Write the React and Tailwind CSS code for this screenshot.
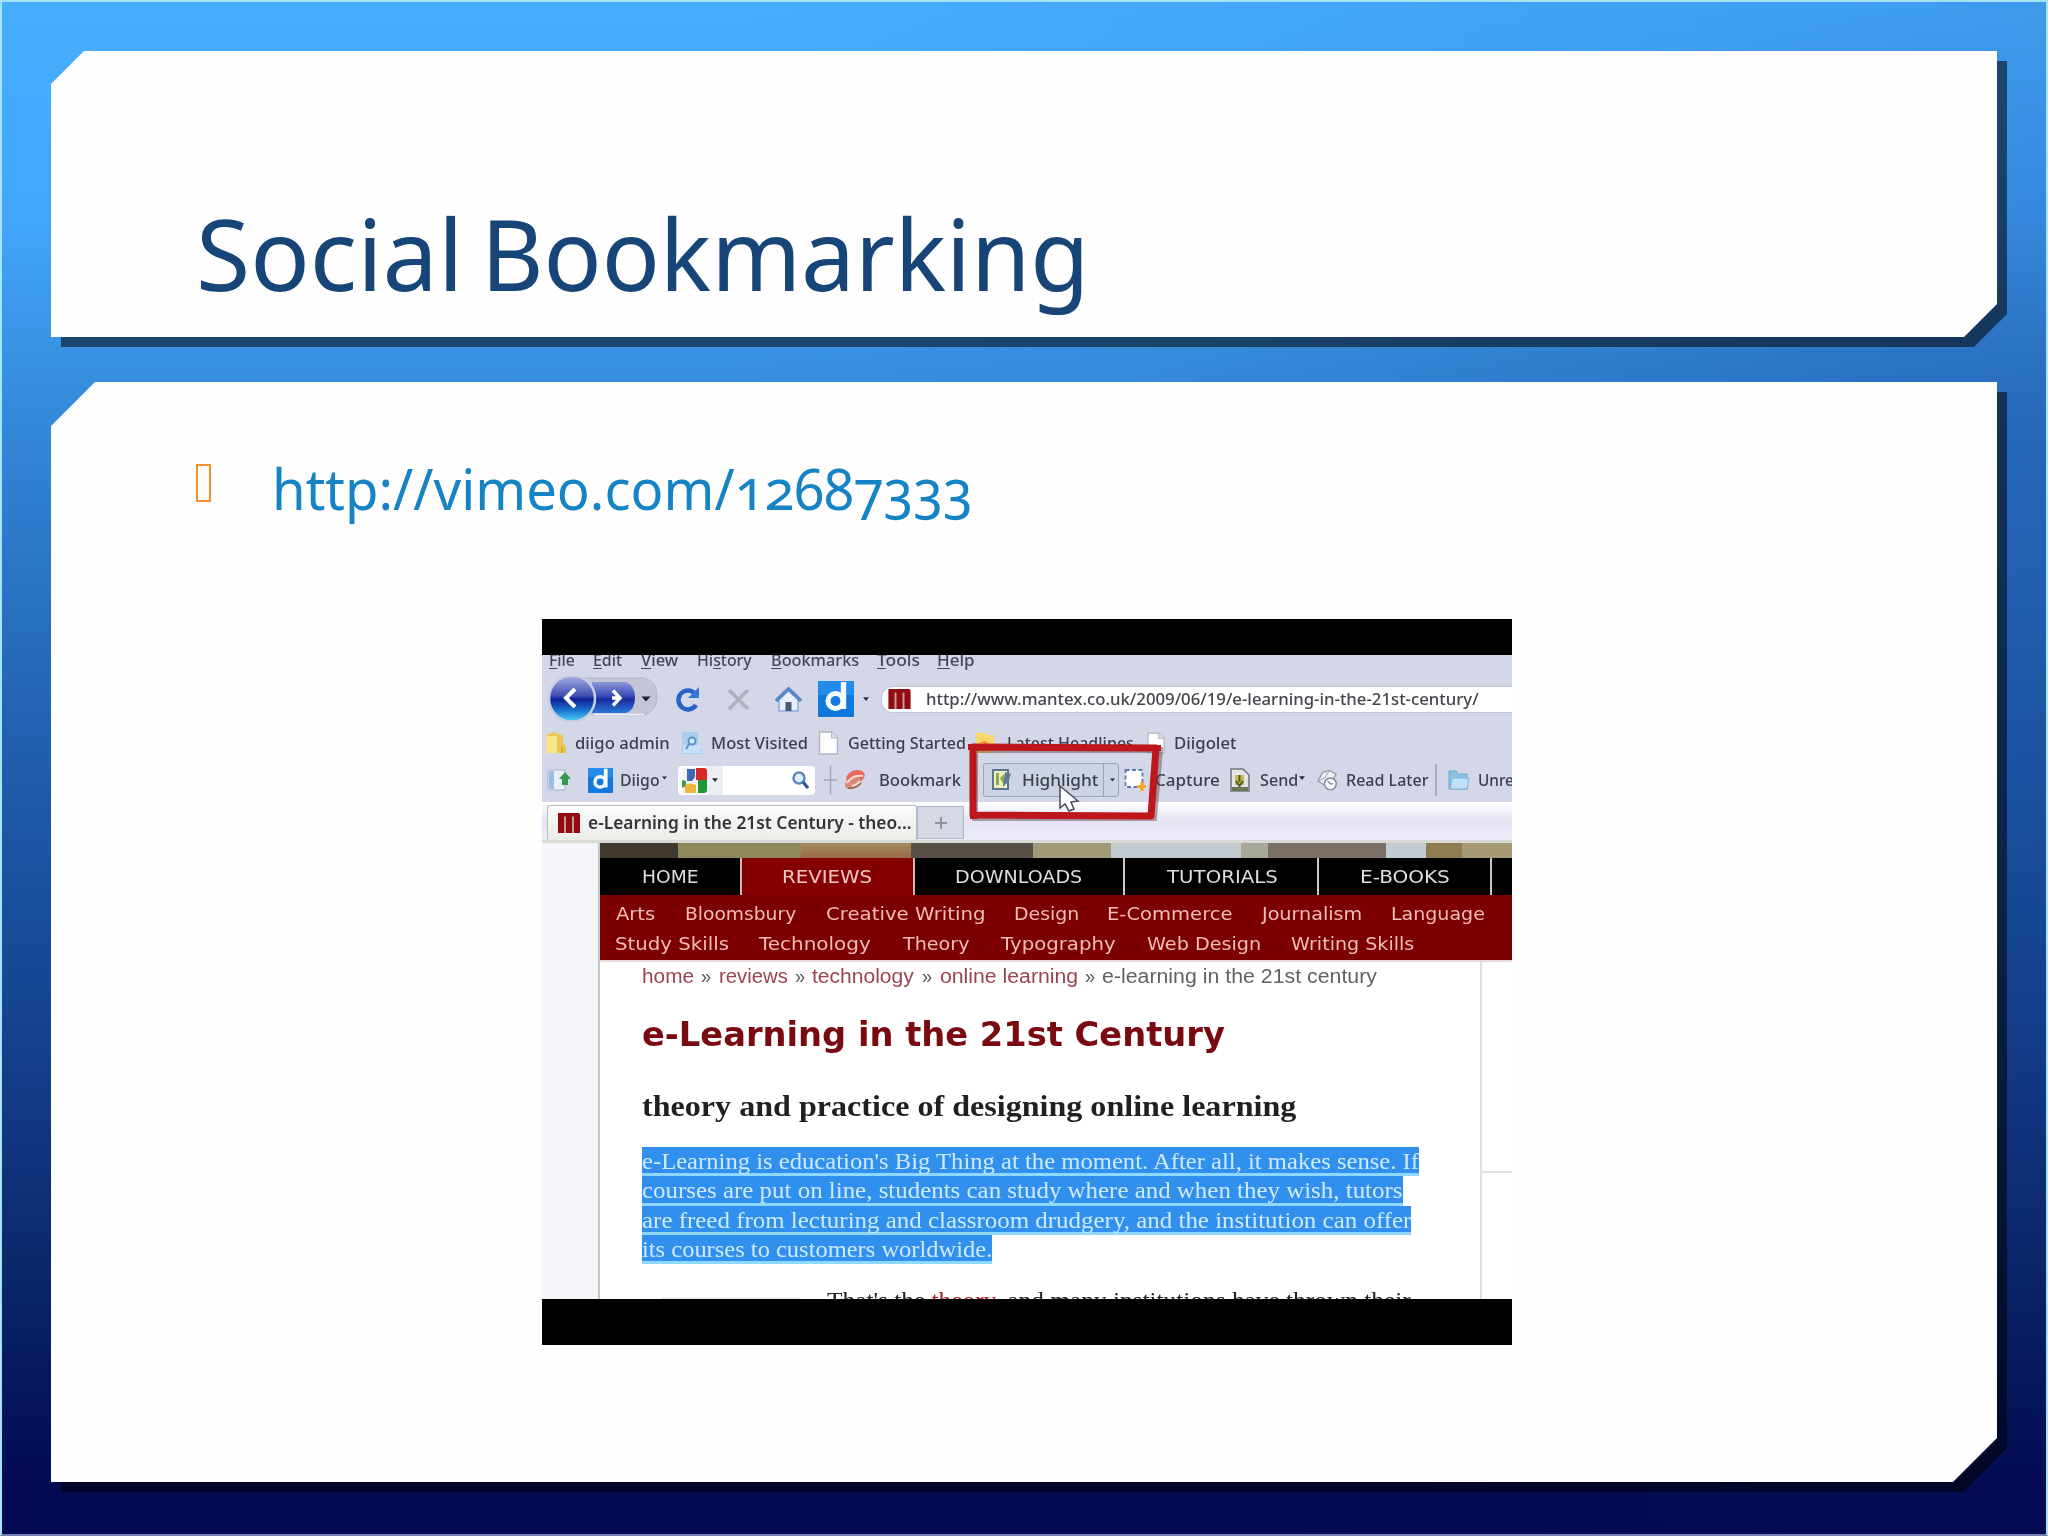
import React, { useLayoutEffect, useRef } from 'react';
import clsx from 'clsx';

// Single line of text stretched or squeezed to the width of its box
const Fit = ({ className, children }) => {
  const box = useRef(null);
  const text = useRef(null);

  useLayoutEffect(() => {
    const natural = text.current.offsetWidth;
    text.current.style.transform = `scaleX(${box.current.clientWidth / natural})`;
  }, []);

  return (
    <div ref={box} className={clsx('shrink-0 whitespace-nowrap', className)}>
      <span ref={text} className="inline-block origin-left">{children}</span>
    </div>
  );
};

const Card = ({ className, shape, children }) => (
  <div className="drop-shadow-[10px_10px_0_rgba(0,0,0,0.53)]">
    <div className={clsx('bg-[#fefefe]', shape, className)}>{children}</div>
  </div>
);

const Caret = ({ className }) => (
  <svg viewBox="0 0 8 5" className={clsx('shrink-0', className)}>
    <path d="M0 0h8L4 5z" fill="#2b2d3a" />
  </svg>
);

const DiigoLogo = ({ className }) => (
  <svg viewBox="0 0 36 36" className={clsx('shrink-0', className)}>
    <rect width="36" height="36" rx="1" fill="#1279dc" />
    <rect width="36" height="14" fill="#2b93ee" opacity=".7" />
    <circle cx="17.500" cy="20" r="7.500" fill="none" stroke="#f4fbff" strokeWidth="5" />
    <path d="M25.500 1v27" stroke="#f4fbff" strokeWidth="5.400" />
  </svg>
);

const MantexLogo = ({ className }) => (
  <svg viewBox="0 0 22 20" className={clsx('shrink-0', className)}>
    <rect width="22" height="20" rx="1" fill="#c79a9a" />
    <path d="M0 0h20q2 0 2 3v17h-6V3.500h-2V20H8V3.500H6V20H0z" fill="#920b10" />
  </svg>
);

const PageIcon = ({ className }) => (
  <svg viewBox="0 0 20 24" className={clsx('shrink-0', className)}>
    <path d="M1 1h12l6 6v16H1z" fill="#fdfdfd" stroke="#b4b6bf" strokeWidth="1.400" />
    <path d="M13 1v6h6" fill="#dcdde2" stroke="#b4b6bf" />
  </svg>
);

const MenuBar = () => (
  <div className="h-[21px] flex items-start text-[17px] font-medium leading-[22px] text-[#454756]">
    <div className="flex -mt-[6px] [&_u]:underline-offset-2">
      <Fit className="ml-[7px] w-[26px]"><u>F</u>ile</Fit>
      <Fit className="ml-[18px] w-[29px]"><u>E</u>dit</Fit>
      <Fit className="ml-[19px] w-[37px]"><u>V</u>iew</Fit>
      <Fit className="ml-[19px] w-[55px]">Hi<u>s</u>tory</Fit>
      <Fit className="ml-[19px] w-[88px]"><u>B</u>ookmarks</Fit>
      <Fit className="ml-[18px] w-[43px]"><u>T</u>ools</Fit>
      <Fit className="ml-[17px] w-[38px]"><u>H</u>elp</Fit>
    </div>
  </div>
);

const BackForward = () => (
  <svg viewBox="0 0 118 46" className="w-[118px] h-[46px] shrink-0">
    <defs>
      <linearGradient id="back" x1="0" y1="0" x2="0" y2="1">
        <stop offset="0" stopColor="#a9b3e4" />
        <stop offset=".44" stopColor="#3d4fb4" />
        <stop offset=".52" stopColor="#0f1f96" />
        <stop offset=".75" stopColor="#1672cf" />
        <stop offset="1" stopColor="#4fd4f4" />
      </linearGradient>
      <linearGradient id="fwd" x1="0" y1="0" x2="0" y2="1">
        <stop offset="0" stopColor="#8c98d8" />
        <stop offset=".45" stopColor="#3a4cb8" />
        <stop offset=".55" stopColor="#1a2a9e" />
        <stop offset="1" stopColor="#2a78d8" />
      </linearGradient>
    </defs>
    <path d="M40 2h62q13 3 13 18t-13 19H50z" fill="#c3c6d6" stroke="#b4b7c8" />
    <path d="M50 6h34q9 3 9 15.500T84 37H50z" fill="url(#fwd)" />
    <path d="M52 38.500h50" stroke="#eef0fa" strokeWidth="1.500" />
    <circle cx="30" cy="22.500" r="23" fill="url(#back)" stroke="#c9cde0" strokeWidth="2.500" />
    <path d="M33 13l-9 9 9 9" fill="none" stroke="#fff" strokeWidth="4" />
    <path d="M71 14.500l7 7.500-7 7.500M70 22h6" fill="none" stroke="#fff" strokeWidth="3.400" />
    <path d="M99.500 20.500h9l-4.500 5z" fill="#1d1e28" />
  </svg>
);

const NavBar = () => (
  <div className="h-[46px] flex items-center">
    <BackForward />
    <svg viewBox="0 0 25 25" className="ml-[15px] w-[25px] h-[25px] shrink-0">
      <path d="M20 6.500A9.500 9.500 0 1 0 21 18" fill="none" stroke="#2862c4" strokeWidth="4.500" />
      <path d="M24 0v11H13z" fill="#3477d6" />
    </svg>
    <svg viewBox="0 0 23 23" className="ml-[27px] w-[23px] h-[23px] shrink-0">
      <path d="M2 2l19 19M21 2L2 21" stroke="#aeb1be" strokeWidth="3.600" />
    </svg>
    <svg viewBox="0 0 27 25" className="ml-[25px] w-[27px] h-[25px] shrink-0">
      <path d="M4 12l9.500-9L23 12v12H4z" fill="#e9effa" stroke="#8fabd8" strokeWidth="1.500" />
      <path d="M1 14L13.500 2 26 14" fill="none" stroke="#5c84c6" strokeWidth="3.800" />
      <path d="M10.500 24v-9h6v9z" fill="#4a5a78" />
    </svg>
    <DiigoLogo className="ml-4 w-9 h-9" />
    <Caret className="ml-[9px] w-[6px] h-[4px]" />
    <div className="ml-3 flex-1 h-[27px] rounded-l-xl border border-r-0 border-[#c2c5d4] bg-white flex items-center">
      <MantexLogo className="ml-[6px] w-[23px] h-5" />
      <Fit className="ml-[15px] w-[553px] text-[17px] font-medium text-[#45464c]">
        http://www.mantex.co.uk/2009/06/19/e-learning-in-the-21st-century/
      </Fit>
    </div>
  </div>
);

const BookmarksBar = () => (
  <div className="h-[40px] pt-px flex items-center text-[17px] font-medium text-[#3c3e4c]">
    <svg viewBox="0 0 21 24" className="ml-[3px] w-[21px] h-6 shrink-0">
      <path d="M1 4l9-3 2 2 6 1v9l3 2v7H1z" fill="#ecc851" />
      <path d="M1 5h11v17H1z" fill="#f9e48c" />
      <path d="M17 16v6" stroke="#b98f28" />
    </svg>
    <Fit className="ml-[9px] w-[95px]">diigo admin</Fit>
    <svg viewBox="0 0 21 24" className="ml-[11px] w-[21px] h-6 shrink-0">
      <path d="M1 1h16v15l4 2v5H1z" fill="#a9cdee" />
      <path d="M2 14h18v8H2z" fill="#c8e0f5" />
      <circle cx="11" cy="10" r="3.500" fill="#d8ebfa" stroke="#5a90c8" strokeWidth="2" />
      <path d="M8 13l-3 5" stroke="#5a90c8" strokeWidth="2" />
    </svg>
    <Fit className="ml-[9px] w-[97px]">Most Visited</Fit>
    <PageIcon className="ml-2.5 w-[21px] h-6" />
    <Fit className="ml-[9px] w-[118px]">Getting Started</Fit>
    <svg viewBox="0 0 20 24" className="ml-[9px] w-5 h-6 shrink-0">
      <path d="M1 2h9l2 2h7v18H1z" fill="#f8d869" />
      <circle cx="9" cy="15" r="5" fill="#f09a3c" />
      <path d="M6 13q5 0 5 5" fill="none" stroke="#fff3d8" strokeWidth="1.500" />
    </svg>
    <Fit className="ml-3 w-[127px]">Latest Headlines</Fit>
    <PageIcon className="ml-[13px] w-[18px] h-6" />
    <Fit className="ml-[9px] w-[62px]">Diigolet</Fit>
  </div>
);

const DiigoBar = () => (
  <div className="h-[36px] flex items-center text-[17px] font-medium text-[#3c3e4c]">
    <svg viewBox="0 0 25 24" className="ml-[5px] w-[25px] h-6 shrink-0">
      <path d="M1 2h17v20H1z" fill="#eaf1fa" stroke="#9db4d4" />
      <path d="M2 3h5v18H2z" fill="#9fbce6" />
      <path d="M18 4l6 7h-3v6h-6v-6h-3z" fill="#3a9a4b" />
    </svg>
    <div className="ml-1.5 w-px h-8 bg-[#a2a5b6]" />
    <DiigoLogo className="ml-2.5 w-[25px] h-[25px]" />
    <Fit className="ml-[7px] w-10">Diigo</Fit>
    <Caret className="ml-0.5 w-[5px] h-[4px] -mt-1" />
    <div className="ml-[11px] w-[137px] h-[29px] shrink-0 rounded-sm bg-white flex items-center">
      <svg viewBox="0 0 25 25" className="ml-1 w-[25px] h-[25px] shrink-0">
        <path d="M0 0h25v25H0z" fill="#f4f4f6" />
        <path d="M14 0h8q3 0 3 3v9H14z" fill="#d42a23" />
        <path d="M16 12h9v10q0 3-3 3h-6z" fill="#23953a" />
        <path d="M5 1h8v8l-3 4H5z" fill="#3f69b5" />
        <path d="M0 12l4 1v5l-4 2z" fill="#3c9c4a" />
        <path d="M3 17q5-3 11 0v8H3z" fill="#edb83c" />
      </svg>
      <div className="w-[16px] h-full bg-[#eceef5] flex items-center justify-center">
        <Caret className="w-[6px] h-[4px]" />
      </div>
      <svg viewBox="0 0 17 18" className="ml-[69px] w-[17px] h-[18px] shrink-0">
        <circle cx="7" cy="7" r="5.500" fill="#e2edf8" stroke="#5f89be" strokeWidth="2.500" />
        <path d="M11 11l5 6" stroke="#33558c" strokeWidth="3.200" />
      </svg>
    </div>
    <svg viewBox="0 0 13 28" className="ml-[9px] w-[13px] h-7 shrink-0">
      <path d="M6.500 0v28M0 14h13" stroke="#a6a9ba" strokeWidth="1.500" />
    </svg>
    <svg viewBox="0 0 23 24" className="ml-1.5 w-[23px] h-6 shrink-0">
      <ellipse cx="12.500" cy="9" rx="9.500" ry="6.500" transform="rotate(-20 12 9)" fill="#ea6a60" />
      <ellipse cx="10" cy="15" rx="8.500" ry="5.500" transform="rotate(-25 10 15)" fill="#dc8a74" />
      <path d="M4 15q6-9 16-7M9 18q5-1 8-5" stroke="#fbe0da" strokeWidth="2" fill="none" />
      <path d="M5 20q8 1 13-5" stroke="#8a6a50" strokeWidth="1.500" fill="none" />
    </svg>
    <Fit className="ml-[13px] w-[82px]">Bookmark</Fit>
    <Caret className="ml-[11px] w-[5px] h-[4px]" />
    <div className="ml-1.5 w-[136px] h-[34px] shrink-0 rounded-[3px] border border-[#9da3b8] bg-[#ccd3e2] flex items-center">
      <svg viewBox="0 0 21 22" className="ml-2 w-[21px] h-[22px] shrink-0">
        <rect x="1" y="1" width="15" height="19" fill="#eef2bd" stroke="#5d7591" strokeWidth="2" />
        <path d="M4 4h3v12H4zM8 9l4-4v11z" fill="#8fa84a" />
        <path d="M13 3l6 2-3 8-5 5 1-8z" fill="#5f7a96" />
      </svg>
      <Fit className="ml-[9px] w-[76px]">Highlight</Fit>
      <div className="ml-[5px] w-px h-full bg-[#9da3b8]" />
      <Caret className="ml-[6px] w-[5px] h-[4px]" />
    </div>
    <svg viewBox="0 0 22 24" className="ml-[5px] w-[22px] h-6 shrink-0">
      <rect x="1.500" y="2" width="17" height="17" fill="#fff" stroke="#5c7cb4" strokeWidth="1.800" strokeDasharray="4 2.500" />
      <path d="M18 14v9M13.500 18.500H22" stroke="#f5a623" strokeWidth="3.200" />
    </svg>
    <Fit className="ml-[9px] w-[65px]">Capture</Fit>
    <svg viewBox="0 0 20 24" className="ml-2.5 w-5 h-6 shrink-0">
      <path d="M1 1h12l6 6v16H1z" fill="#e3e5e6" stroke="#74787c" strokeWidth="1.600" />
      <path d="M5 7h9v10H5z" fill="#c9ba56" />
      <path d="M9.500 7v7M6 13l3.500 5 3.500-5" stroke="#4e5a2c" strokeWidth="2" fill="none" />
      <path d="M2 19h16v4H2z" fill="#6a7752" />
    </svg>
    <Fit className="ml-[10px] w-[38px]">Send</Fit>
    <Caret className="ml-px w-[6px] h-[4px] -mt-1" />
    <svg viewBox="0 0 22 22" className="ml-3 w-[21px] h-[22px] shrink-0">
      <path d="M1 12L6 3l7-2 7 4-5 8-8 3z" fill="#eceef2" stroke="#9a9ea8" strokeWidth="1.400" />
      <path d="M1 12l7-3 5-8" fill="none" stroke="#9a9ea8" />
      <circle cx="14" cy="15" r="6.200" fill="#f8f8fa" stroke="#868a94" strokeWidth="1.600" />
      <path d="M11 12l3 3h3" stroke="#868a94" strokeWidth="1.400" fill="none" />
    </svg>
    <Fit className="ml-2 w-[82px]">Read Later</Fit>
    <div className="ml-[7px] w-0.5 h-8 shrink-0 bg-[#a9acbd]" />
    <svg viewBox="0 0 22 20" className="ml-[11px] w-[22px] h-5 shrink-0">
      <path d="M1 1h7l2 3h9v15H1z" fill="#8dbfe4" stroke="#6fa5d0" />
      <path d="M4 8h17l-2 11H2z" fill="#bfe0f5" stroke="#7fb2da" />
    </svg>
    <Fit className="ml-[8px] w-9">Unre</Fit>
  </div>
);

const TabStrip = () => (
  <div className="h-[41px] flex items-end border-b-[3px] border-[#d9d9d5] bg-linear-to-b from-white via-[#e4e4f4] to-[#ececfa]">
    <div className="ml-[5px] w-[370px] h-[35px] rounded-t-[3px] border border-b-0 border-[#b9bac4] bg-linear-to-b from-[#fbfbfb] to-[#ebebe8] flex items-center">
      <MantexLogo className="ml-[10px] w-[22px] h-5" />
      <Fit className="ml-2 w-[323px] text-[17px] font-semibold text-[#34353b]">
        e-Learning in the 21st Century - theo...
      </Fit>
    </div>
    <div className="w-[47px] h-[33px] self-start mt-1 border border-[#b4b6c6] bg-[#d5d8e6] flex items-center justify-center">
      <svg viewBox="0 0 12 12" className="w-3 h-3">
        <path d="M6 0v12M0 6h12" stroke="#9194a4" strokeWidth="2" />
      </svg>
    </div>
  </div>
);

const Banner = () => (
  <div className="h-[15px] flex shrink-0">
    <div className="w-[78px] bg-[#3f3a2c]" />
    <div className="w-[123px] bg-[#8f875c]" />
    <div className="w-[110px] bg-linear-to-b from-[#a08c60] to-[#9a6a48]" />
    <div className="w-[122px] bg-[#575048]" />
    <div className="w-[78px] bg-[#a19a78]" />
    <div className="w-[130px] bg-[#c3cbd0]" />
    <div className="w-[27px] bg-[#a7a898]" />
    <div className="w-[118px] bg-[#7b6f68]" />
    <div className="w-[40px] bg-[#c3ccd2]" />
    <div className="w-[36px] bg-[#8e7d52]" />
    <div className="flex-1 bg-[#a59a74]" />
  </div>
);

const SiteNav = () => (
  <div className="shrink-0 font-['DejaVu_Sans',sans-serif] text-[18px]">
    <div className="h-[37px] bg-black flex items-center text-[#dedede]">
      <div className="w-[140px] h-full flex items-center">
        <Fit className="ml-[42px] w-[57px]">HOME</Fit>
      </div>
      <div className="w-[175px] h-full flex items-center bg-[#840000] border-x-2 border-[#d3b5b5] text-[#f3c6c2]">
        <Fit className="ml-[40px] w-[90px]">REVIEWS</Fit>
      </div>
      <div className="w-[210px] h-full flex items-center border-r-2 border-[#c9c9c9]">
        <Fit className="ml-[40px] w-[127px]">DOWNLOADS</Fit>
      </div>
      <div className="w-[194px] h-full flex items-center border-r-2 border-[#c9c9c9]">
        <Fit className="ml-[42px] w-[111px]">TUTORIALS</Fit>
      </div>
      <div className="w-[173px] h-full flex items-center border-r-2 border-[#c9c9c9]">
        <Fit className="ml-[41px] w-[90px]">E-BOOKS</Fit>
      </div>
    </div>
    <div className="h-[65px] pt-1 bg-[#7d0000] text-[#f2bdb6] leading-[30px]">
      <div className="flex">
        <Fit className="ml-4 w-[39px]">Arts</Fit>
        <Fit className="ml-[30px] w-[111px]">Bloomsbury</Fit>
        <Fit className="ml-[30px] w-[159px]">Creative Writing</Fit>
        <Fit className="ml-[29px] w-[65px]">Design</Fit>
        <Fit className="ml-[28px] w-[126px]">E-Commerce</Fit>
        <Fit className="ml-[29px] w-[100px]">Journalism</Fit>
        <Fit className="ml-[29px] w-[94px]">Language</Fit>
      </div>
      <div className="flex">
        <Fit className="ml-[15px] w-[114px]">Study Skills</Fit>
        <Fit className="ml-[30px] w-[112px]">Technology</Fit>
        <Fit className="ml-[32px] w-[67px]">Theory</Fit>
        <Fit className="ml-[31px] w-[115px]">Typography</Fit>
        <Fit className="ml-[31px] w-[114px]">Web Design</Fit>
        <Fit className="ml-[30px] w-[123px]">Writing Skills</Fit>
      </div>
    </div>
  </div>
);

const Breadcrumb = () => (
  <div className="flex pt-px text-[20px] leading-[26px] font-['Liberation_Sans',sans-serif] text-[#9a4450]">
    <Fit className="w-[52px]">home</Fit>
    <Fit className="ml-[7px] w-[10px] text-[#555]">»</Fit>
    <Fit className="ml-2 w-[69px]">reviews</Fit>
    <Fit className="ml-[7px] w-[10px] text-[#555]">»</Fit>
    <Fit className="ml-[7px] w-[102px]">technology</Fit>
    <Fit className="ml-2 w-[10px] text-[#555]">»</Fit>
    <Fit className="ml-2 w-[138px]">online learning</Fit>
    <Fit className="ml-[7px] w-[10px] text-[#555]">»</Fit>
    <Fit className="ml-[7px] w-[275px] text-[#626262]">e-learning in the 21st century</Fit>
  </div>
);

const Selected = ({ className, children }) => (
  <Fit className={clsx('h-[29.3px] border-b-[3px] border-[#8fd8fb] bg-[#3190ee]', className)}>{children}</Fit>
);

const Article = () => (
  <div className="w-[882px] shrink-0 pl-[42px] border-r-2 border-[#dfdfe8] overflow-hidden">
    <Breadcrumb />
    <Fit className="mt-[26px] w-[583px] font-['DejaVu_Sans',sans-serif] font-bold text-[33px] leading-[40px] text-[#780a10]">
      e-Learning in the 21st Century
    </Fit>
    <Fit className="mt-[33px] w-[654px] font-['Liberation_Serif',serif] font-bold text-[29px] leading-[36px] text-[#1f211f]">
      theory and practice of designing online learning
    </Fit>
    <div className="mt-[23px] font-['Liberation_Serif',serif] text-[24px] leading-[28px] text-[#cdeaff]">
      <Selected className="w-[777px]">e-Learning is education's Big Thing at the moment. After all, it makes sense. If</Selected>
      <Selected className="w-[761px]">courses are put on line, students can study where and when they wish, tutors</Selected>
      <Selected className="w-[769px]">are freed from lecturing and classroom drudgery, and the institution can offer</Selected>
      <Selected className="w-[350px]">its courses to customers worldwide.</Selected>
    </div>
    <div className="flex items-start mt-[22px]">
      <div className="ml-[20px] mt-[11px] w-[138px] h-2 bg-[#ededee]" />
      <Fit className="ml-[27px] w-[584px] font-['Liberation_Serif',serif] text-[24px] leading-[28px] text-[#222]">
        That's the <span className="text-[#a0202c]">theory</span>, and many institutions have thrown their
      </Fit>
    </div>
  </div>
);

// Hand-drawn marker around the Highlight button, with the pointer on top
const Marker = () => (
  <svg viewBox="0 0 970 644" className="absolute inset-0 w-[970px] h-[644px]">
    <path d="M433 95L618 95 612 163 433 163z" fill="none" stroke="#5a3a46" strokeWidth="6" opacity=".45" />
    <path d="M431 92L614 93 609 161 431 160z" fill="none" stroke="#be161d" strokeWidth="7" strokeLinejoin="round" />
    <path d="M426 92l10 0M428 161h8M610 93h9" stroke="#be161d" strokeWidth="6" />
    <path d="M518 131v22l5-4 4 7 5-2-3-7 7-1z" fill="#fff" stroke="#4a4a55" strokeWidth="1.500" />
  </svg>
);

const VideoStill = () => (
  <div className="w-[970px] h-[726px] pt-[36px] pb-[46px] bg-black">
    <div className="relative h-[644px] overflow-hidden bg-white">
      <div className="h-full flex flex-col blur-[0.7px] font-['Noto_Sans',sans-serif]">
        <div className="shrink-0 bg-[#d3d7e8]">
          <MenuBar />
          <NavBar />
          <BookmarksBar />
          <DiigoBar />
          <div className="h-1" />
        </div>
        <div className="shrink-0">
          <TabStrip />
        </div>
        <div className="flex-1 min-h-0 flex">
          <div className="w-[58px] shrink-0 bg-[#f5f6f9] border-r-2 border-[#c6c7cc]" />
          <div className="flex-1 min-w-0 flex flex-col overflow-hidden">
            <Banner />
            <SiteNav />
            <div className="flex-1 min-h-0 flex border-t-2 border-[#e8d8d8]">
              <Article />
              <div className="flex-1 pt-[209px]">
                <div className="h-0.5 bg-[#dfdfe8]" />
              </div>
            </div>
          </div>
        </div>
        <Marker />
      </div>
    </div>
  </div>
);

const App = () => (
  <div className="w-[2048px] h-[1536px] border-2 border-[#a5e4f5] border-b-[#7080b0] overflow-hidden bg-[radial-gradient(ellipse_900px_420px_at_100%_420px,rgba(10,30,120,0.2),rgba(10,30,120,0)),linear-gradient(90deg,rgba(0,20,90,0)_35%,rgba(0,20,90,0.12)_100%),linear-gradient(180deg,#47aeff_0%,#43a6fb_14%,#3a94e4_22%,#2f7fd0_32%,#225fb0_48%,#164490_66%,#0b2468_84%,#030a52_97%)]">
    <div className="pt-[49px] pl-[49px] pr-[49px] flex flex-col gap-[45px] font-['Noto_Sans',sans-serif]">
      <Card
        className="h-[286px] pt-[142px] pl-[145px]"
        shape="[clip-path:polygon(33px_0,100%_0,100%_calc(100%-33px),calc(100%-33px)_100%,0_100%,0_33px)]"
      >
        <div className="flex text-[99px] leading-[120px] text-[#174577]">
          <Fit className="w-[267px]">Social</Fit>
          <Fit className="ml-[18px] w-[608px]">Bookmarking</Fit>
        </div>
      </Card>
      <Card
        className="h-[1100px] pt-[66px]"
        shape="[clip-path:polygon(44px_0,100%_0,100%_calc(100%-44px),calc(100%-44px)_100%,0_100%,0_44px)]"
      >
        <div className="flex h-[80px]">
          <div className="ml-[145px] mt-[16px] w-[15px] h-[38px] border-2 border-[#f0912c]" />
          <Fit className="ml-[61px] w-[701px] text-[56px] leading-[80px] text-[#1583c4] oldstyle-nums">
            http://vimeo.com/12687333
          </Fit>
        </div>
        <div className="mt-[91px] ml-[491px]">
          <VideoStill />
        </div>
      </Card>
    </div>
  </div>
);

export default App;
